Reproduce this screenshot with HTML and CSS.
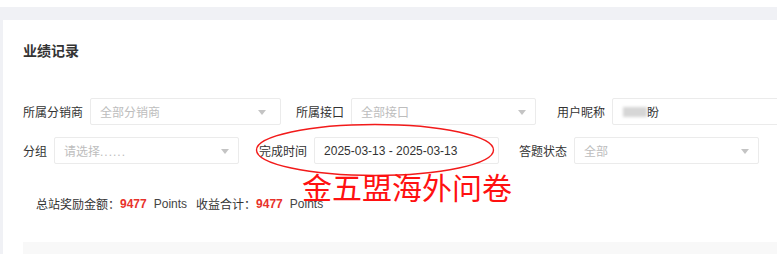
FILE: index.html
```html
<!DOCTYPE html>
<html lang="zh-CN">
<head>
<meta charset="utf-8">
<link rel="stylesheet" href="styles.css">
</head>
<body>
<div class="page">
  <div class="topstrip"></div>
  <div class="main">
    <div class="card">
      <h2 class="title">业绩记录</h2>
      <div class="form">
        <div class="row">
          <div class="field field--w15">
            <span class="label">所属分销商</span>
            <div class="box box--w191"><span class="ph">全部分销商</span><i class="caret caret--far"></i></div>
          </div>
          <div class="field field--w21">
            <span class="label">所属接口</span>
            <div class="box box--w185"><span class="ph">全部接口</span><i class="caret"></i></div>
          </div>
          <div class="field">
            <span class="label">用户昵称</span>
            <div class="box box--wide"><span class="blur"></span><span class="val">盼</span></div>
          </div>
        </div>
        <div class="row">
          <div class="field field--w20">
            <span class="label">分组</span>
            <div class="box box--w185"><span class="ph">请选择<span class="dots">......</span></span><i class="caret"></i></div>
          </div>
          <div class="field field--w20">
            <span class="label">完成时间</span>
            <div class="box box--w185"><span class="val">2025-03-13 - 2025-03-13</span></div>
          </div>
          <div class="field">
            <span class="label">答题状态</span>
            <div class="box box--w185"><span class="ph">全部</span><i class="caret"></i></div>
          </div>
        </div>
      </div>
      <div class="stats">
        <span class="stat-label">总站奖励金额：</span><b class="num">9477</b><span class="unit">Points</span>
        <span class="stat-label">收益合计：</span><b class="num">9477</b><span class="unit">Points</span>
      </div>
      <div class="table"></div>
    </div>
  </div>
  <svg class="ring" width="246" height="56" viewBox="0 0 246 56"><ellipse cx="123" cy="28" rx="118.5" ry="25.5" fill="none" stroke="#f21a1a" stroke-width="1.4"/></svg>
  <div class="note">金五盟海外问卷</div>
</div>
</body>
</html>
```
FILE: styles.css
```css
html, body {
  margin: 0;
  padding: 0;
  background: #ffffff;
  overflow: hidden;
}
.page {
  position: relative;
  width: 777px;
  height: 254px;
  overflow: hidden;
  font-family: "Noto Sans CJK SC", "Liberation Sans", sans-serif;
  color: #333;
}
.topstrip {
  height: 7px;
  background: #ffffff;
}
.main {
  background: #f0f1f5;
  padding: 13px 0 0 3px;
  height: 247px;
  box-sizing: border-box;
}
.card {
  background: #ffffff;
  width: 820px;
  height: 234px;
  padding: 20px 0 0 20px;
  box-sizing: border-box;
}
.title {
  margin: 0;
  font-size: 14px;
  line-height: 20px;
  font-weight: 700;
  color: #333;
}
.form {
  margin-top: 38px;
  display: flex;
  flex-direction: column;
  gap: 12px;
}
.row {
  display: flex;
  align-items: center;
}
.field {
  display: flex;
  align-items: center;
  gap: 7px;
}
.field--w15 { margin-right: 15px; }
.field--w20 { margin-right: 20px; }
.field--w21 { margin-right: 21px; }
.label {
  font-size: 12px;
  line-height: 16px;
  color: #333;
  white-space: nowrap;
}
.box {
  position: relative;
  height: 27px;
  box-sizing: border-box;
  border: 1px solid #ebebeb;
  border-radius: 2px;
  display: flex;
  align-items: center;
  padding: 0 9px;
  font-size: 12px;
}
.box--w191 { width: 191px; }
.box--w185 { width: 185px; }
.box--wide { width: 200px; }
.ph {
  color: #bdbdbd;
  white-space: nowrap;
}
.dots {
  font-family: "Liberation Sans", sans-serif;
  letter-spacing: 1px;
}
.val {
  font-family: "Liberation Sans", "Noto Sans CJK SC", sans-serif;
  color: #333;
}
.blur {
  display: inline-block;
  width: 24px;
  height: 10px;
  margin-left: 1px;
  background: #d6d6d6;
  filter: blur(1.5px);
}
.caret {
  position: absolute;
  right: 9px;
  top: 11px;
  width: 0;
  height: 0;
  border-left: 4.5px solid transparent;
  border-right: 4.5px solid transparent;
  border-top: 5px solid #c4c4c4;
}
.caret--far {
  right: 14px;
}
.stats {
  margin-top: 30px;
  padding-left: 13px;
  font-size: 12px;
  line-height: 20px;
  color: #333;
  display: flex;
  align-items: center;
  white-space: nowrap;
}
.num {
  font-family: "Liberation Sans", sans-serif;
  color: #e8322b;
  font-weight: 700;
  margin-right: 7px;
}
.unit {
  font-family: "Liberation Sans", sans-serif;
  color: #444;
  margin-right: 9px;
}
.table {
  margin-top: 28px;
  height: 40px;
  background: #f8f8f8;
}
.ring {
  position: absolute;
  left: 252px;
  top: 122px;
}
.note {
  position: absolute;
  left: 302px;
  top: 170px;
  font-size: 30px;
  line-height: 32px;
  color: #ff1111;
  white-space: nowrap;
}
```
